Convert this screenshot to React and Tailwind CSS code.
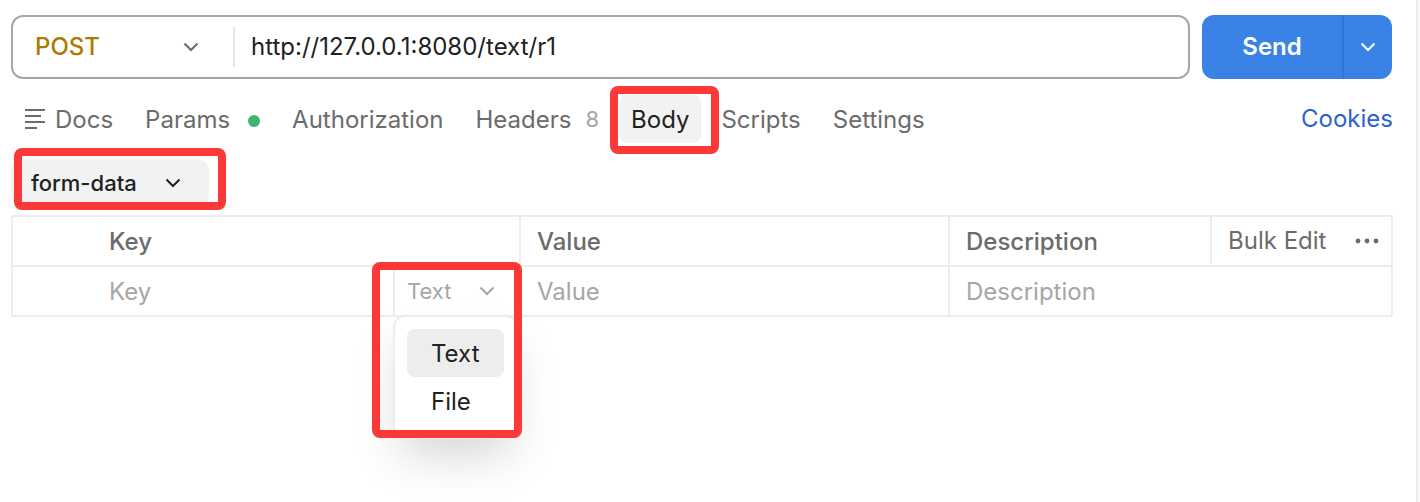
import { useState } from 'react';

function Chevron({ className = '' }) {
    return (
        <svg viewBox="0 0 24 24" fill="none" stroke="currentColor" strokeWidth="2" className={`size-6 ${className}`}>
            <path d="M5.5 8.5L12 15l6.5-6.5" />
        </svg>
    );
}

function DocsIcon() {
    return (
        <svg viewBox="0 0 24 24" fill="currentColor" className="size-6">
            <path d="M2 2h20v2H2zM2 8h16v2H2zM2 14h20v2H2zM2 20h12v2H2z" />
        </svg>
    );
}

function Highlight({ className }) {
    return <div className={`pointer-events-none absolute z-20 rounded-lg border-8 border-[#fc3838] ${className}`} />;
}

const tabs = [
    { name: 'Docs', icon: true },
    { name: 'Params', dot: true },
    { name: 'Authorization' },
    { name: 'Headers', count: 8 },
    { name: 'Body' },
    { name: 'Scripts' },
    { name: 'Settings' }
];

function RequestBar() {
    return (
        <div className="flex gap-3 pr-px">
            <div className="flex h-16 flex-1 items-center rounded-xl border-2 border-[#a6a6a6]">
                <div className="relative flex h-10 w-[222px] items-center border-r-2 border-[#e6e6e6]">
                    <select
                        aria-label="Method"
                        className="h-full w-full appearance-none bg-transparent pl-[22px] font-medium text-[#ad7a03] outline-none"
                    >
                        <option>POST</option>
                        <option>GET</option>
                    </select>
                    <Chevron className="pointer-events-none absolute right-[30px] text-[#6b6b6b]" />
                </div>
                <input
                    aria-label="Request URL"
                    defaultValue="http://127.0.0.1:8080/text/r1"
                    className="min-w-0 flex-1 px-4 text-[#212121] outline-none"
                />
            </div>
            <div className="flex h-16 overflow-hidden rounded-xl bg-[#3a82e6] text-white">
                <button className="w-[140px] font-semibold">Send</button>
                <button aria-label="Send options" className="flex w-[50px] items-center justify-center border-l-2 border-[#3375d6]">
                    <Chevron />
                </button>
            </div>
        </div>
    );
}

function Tabs({ active, onChange }) {
    return (
        <div className="mt-4 flex items-center justify-between">
            <div className="flex gap-2">
                {tabs.map((tab) => (
                    <button
                        key={tab.name}
                        onClick={() => onChange(tab.name)}
                        className={`relative flex h-12 items-center rounded-lg px-3 ${
                            tab.name === active ? 'bg-[#f2f2f2] text-[#212121]' : 'text-[#6b6b6b]'
                        }`}
                    >
                        {tab.icon && <span className="mr-2"><DocsIcon /></span>}
                        <span className="pt-0.5">{tab.name}</span>
                        {tab.dot && <span className="mt-1 ml-[18px] size-3 rounded-full bg-[#40b36f]" />}
                        {tab.count && <span className="ml-3.5 text-[22px] text-[#a6a6a6]">{tab.count}</span>}
                        {tab.name === 'Body' && <Highlight className="-top-[9px] -right-[18px] -bottom-[11px] -left-[9px]" />}
                    </button>
                ))}
            </div>
            <a href="#cookies" className="text-[#2b62d0]">Cookies</a>
        </div>
    );
}

function TypePicker() {
    const [type, setType] = useState('Text');

    return (
        <div className="relative h-12 w-[126px] border-l-2 border-[#ededed]">
            <button
                aria-haspopup="listbox"
                aria-expanded="true"
                className="flex h-full w-full items-center justify-between pr-5 pl-3 text-[22px] text-[#a6a6a6]"
            >
                {type}
                <Chevron />
            </button>
            <div
                role="listbox"
                aria-label="Field type"
                className="absolute top-full -left-0.5 z-10 w-[125px] rounded-xl border-2 border-[#ededed] bg-white p-3 shadow-[0_24px_48px_-8px_rgba(0,0,0,0.17)]"
            >
                {['Text', 'File'].map((option) => (
                    <button
                        key={option}
                        role="option"
                        aria-selected={option === type}
                        onClick={() => setType(option)}
                        className={`block h-12 w-full rounded-lg pt-0.5 pl-6 text-left text-[#212121] ${
                            option === type ? 'bg-[#ededed]' : ''
                        }`}
                    >
                        {option}
                    </button>
                ))}
            </div>
            <Highlight className="-top-[5px] -right-[3px] -bottom-[123px] -left-[23px]" />
        </div>
    );
}

function FormTable() {
    const cell = 'h-[50px] border-2 border-[#ededed] p-0';
    const field = 'block w-full pt-0.5 text-[#212121] outline-none placeholder:text-[#a6a6a6]';

    return (
        <table className="w-full table-fixed border-collapse text-left text-[#6b6b6b]">
            <colgroup>
                <col className="w-[508px]" />
                <col />
                <col className="w-[262px]" />
                <col className="w-[181px]" />
            </colgroup>
            <thead>
                <tr>
                    <th className={`${cell} pt-0.5 pl-24 font-medium`}>Key</th>
                    <th className={`${cell} pt-0.5 pl-4 font-medium`}>Value</th>
                    <th className={`${cell} pt-0.5 pl-4 font-medium`}>Description</th>
                    <th className={`${cell} font-normal`}>
                        <div className="flex items-center justify-between pr-3 pl-4">
                            <button>Bulk Edit</button>
                            <button aria-label="More options">
                                <svg viewBox="0 0 24 24" fill="currentColor" className="size-6">
                                    <circle cx="3" cy="12" r="2.4" />
                                    <circle cx="12" cy="12" r="2.4" />
                                    <circle cx="21" cy="12" r="2.4" />
                                </svg>
                            </button>
                        </div>
                    </th>
                </tr>
            </thead>
            <tbody>
                <tr>
                    <td className={cell}>
                        <div className="flex items-center">
                            <div className="min-w-0 flex-1 pl-24">
                                <input aria-label="Key" placeholder="Key" className={field} />
                            </div>
                            <TypePicker />
                        </div>
                    </td>
                    <td className={`${cell} px-4`}>
                        <input aria-label="Value" placeholder="Value" className={field} />
                    </td>
                    <td className={`${cell} px-4`} colSpan={2}>
                        <input aria-label="Description" placeholder="Description" className={field} />
                    </td>
                </tr>
            </tbody>
        </table>
    );
}

export default function App() {
    const [active, setActive] = useState('Body');

    return (
        <div className="min-h-screen bg-[#f9f9f9] pr-0.5 font-['Inter',sans-serif] text-[24px] leading-8">
            <main className="min-h-screen border-r-2 border-[#ededed] bg-white pt-[15px] pr-[23px] pl-[11px]">
                <RequestBar />
                <Tabs active={active} onChange={setActive} />
                <div className="relative mt-4 mb-2 flex h-12 w-[198px] items-center">
                    <select
                        aria-label="Body type"
                        className="h-full w-full appearance-none rounded-xl bg-[#f2f2f2] pl-5 text-[22px] font-medium text-[#212121] outline-none"
                    >
                        <option>form-data</option>
                        <option>raw</option>
                    </select>
                    <Chevron className="pointer-events-none absolute right-6 text-[#212121]" />
                    <Highlight className="-top-[11px] -right-[17px] -bottom-[3px] left-[3px]" />
                </div>
                <FormTable />
            </main>
        </div>
    );
}
